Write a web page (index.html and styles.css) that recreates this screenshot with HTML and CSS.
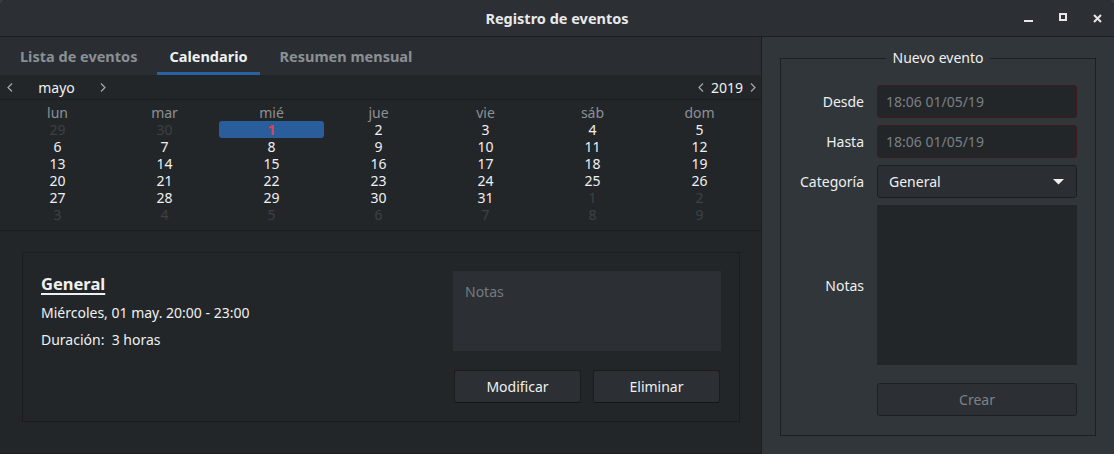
FILE: index.html
```html
<!DOCTYPE html>
<html lang="es">
<head>
<meta charset="utf-8">
<title>Registro de eventos</title>
<link rel="stylesheet" href="styles.css">
</head>
<body>
<div class="window">
  <header class="titlebar">
    <div class="title">Registro de eventos</div>
    <div class="controls">
      <svg class="ctl ctl-min" width="9" height="8" viewBox="0 0 9 8"><rect x="0" y="6" width="9" height="2" fill="#e6e7e8"/></svg>
      <svg class="ctl ctl-max" width="8" height="8" viewBox="0 0 8 8"><rect x="1" y="1" width="6" height="6" fill="none" stroke="#e6e7e8" stroke-width="2"/></svg>
      <svg class="ctl ctl-close" width="9" height="9" viewBox="0 0 9 9"><path d="M1 1 L8 8 M8 1 L1 8" stroke="#e6e7e8" stroke-width="2" fill="none"/></svg>
    </div>
  </header>

  <div class="main">
    <section class="left">
      <nav class="tabs">
        <div class="tab">Lista de eventos</div>
        <div class="tab active">Calendario</div>
        <div class="tab">Resumen mensual</div>
      </nav>

      <div class="calendar">
        <div class="cal-head">
          <div class="nav nav-month">
            <svg class="chev" width="6" height="9" viewBox="0 0 6 9"><path d="M5 0.5 L1 4.5 L5 8.5" fill="none" stroke="#a4a8ac" stroke-width="1.2"/></svg>
            <span class="nav-label month">mayo</span>
            <svg class="chev" width="6" height="9" viewBox="0 0 6 9"><path d="M1 0.5 L5 4.5 L1 8.5" fill="none" stroke="#a4a8ac" stroke-width="1.2"/></svg>
          </div>
          <div class="nav nav-year">
            <svg class="chev" width="6" height="9" viewBox="0 0 6 9"><path d="M5 0.5 L1 4.5 L5 8.5" fill="none" stroke="#a4a8ac" stroke-width="1.2"/></svg>
            <span class="nav-label year">2019</span>
            <svg class="chev" width="6" height="9" viewBox="0 0 6 9"><path d="M1 0.5 L5 4.5 L1 8.5" fill="none" stroke="#a4a8ac" stroke-width="1.2"/></svg>
          </div>
        </div>
        <div class="cal-grid">
          <div class="dn">lun</div><div class="dn">mar</div><div class="dn">mié</div><div class="dn">jue</div><div class="dn">vie</div><div class="dn">sáb</div><div class="dn">dom</div>
          <div class="d other">29</div><div class="d other">30</div><div class="d sel"><span>1</span></div><div class="d">2</div><div class="d">3</div><div class="d">4</div><div class="d">5</div>
          <div class="d">6</div><div class="d">7</div><div class="d">8</div><div class="d">9</div><div class="d">10</div><div class="d">11</div><div class="d">12</div>
          <div class="d">13</div><div class="d">14</div><div class="d">15</div><div class="d">16</div><div class="d">17</div><div class="d">18</div><div class="d">19</div>
          <div class="d">20</div><div class="d">21</div><div class="d">22</div><div class="d">23</div><div class="d">24</div><div class="d">25</div><div class="d">26</div>
          <div class="d">27</div><div class="d">28</div><div class="d">29</div><div class="d">30</div><div class="d">31</div><div class="d other">1</div><div class="d other">2</div>
          <div class="d other">3</div><div class="d other">4</div><div class="d other">5</div><div class="d other">6</div><div class="d other">7</div><div class="d other">8</div><div class="d other">9</div>
        </div>
      </div>

      <div class="details">
        <div class="card">
          <div class="info">
            <div class="ev-title">General</div>
            <div class="ev-line">Miércoles, 01 may. 20:00 - 23:00</div>
            <div class="ev-line">Duración:&nbsp; 3 horas</div>
          </div>
          <div class="side">
            <div class="notes-view">Notas</div>
            <div class="btn-row">
              <div class="btn">Modificar</div>
              <div class="btn">Eliminar</div>
            </div>
          </div>
        </div>
      </div>
    </section>

    <aside class="right">
      <fieldset class="group">
        <legend class="group-title">Nuevo evento</legend>
        <div class="form">
          <label class="lbl">Desde</label>
          <div class="field date">18:06 01/05/19</div>
          <label class="lbl">Hasta</label>
          <div class="field date">18:06 01/05/19</div>
          <label class="lbl">Categoría</label>
          <div class="field combo"><span>General</span>
            <svg width="11" height="6" viewBox="0 0 11 6"><path d="M0 0 L11 0 L5.5 5.5 Z" fill="#eff0f1"/></svg>
          </div>
          <label class="lbl">Notas</label>
          <div class="field textarea"></div>
          <div class="spacer"></div>
          <div class="field create">Crear</div>
        </div>
      </fieldset>
    </aside>
  </div>
</div>
</body>
</html>
```

FILE: styles.css
```css
* { box-sizing: border-box; }

html, body {
  margin: 0;
  padding: 0;
  background: #3a3d40;
}

body {
  font-family: "Noto Sans", "Liberation Sans", sans-serif;
  font-size: 14px;
  color: #eff0f1;
}

.window {
  width: 1114px;
  height: 454px;
  display: flex;
  flex-direction: column;
  border-radius: 6px 6px 0 0;
  overflow: hidden;
  background: #232629;
}

/* Title bar */
.titlebar {
  height: 37px;
  flex: none;
  background: #2c2f33;
  border-bottom: 1px solid #1b1d20;
  display: flex;
  align-items: center;
  justify-content: center;
  position: relative;
}

.title {
  font-weight: bold;
  font-size: 14.5px;
  color: #e8e9ea;
  line-height: 20px;
}

.controls {
  position: absolute;
  right: 12px;
  top: 13px;
  display: flex;
  align-items: flex-start;
  gap: 26px;
}

.ctl { display: block; }
.ctl-min { margin-top: 1px; }
.ctl-close { margin-top: 1px; }

/* Main area */
.main {
  flex: 1;
  display: flex;
  min-height: 0;
}

.left {
  width: 762px;
  flex: none;
  display: flex;
  flex-direction: column;
  border-right: 1px solid #1c1f22;
  background: #232629;
}

/* Tabs */
.tabs {
  height: 38px;
  flex: none;
  background: #2a2e32;
  display: flex;
  padding-left: 8px;
  gap: 8px;
}

.tab {
  padding: 2px 12px 0;
  font-weight: bold;
  font-size: 14.5px;
  color: #8b9095;
  display: flex;
  align-items: center;
  border-bottom: 3px solid transparent;
}

.tab.active {
  color: #eff0f1;
  border-bottom-color: #2862a5;
}

/* Calendar */
.calendar {
  height: 156px;
  flex: none;
  background: #232629;
  border-bottom: 1px solid #1b1d20;
}

.cal-head {
  height: 25px;
  border-bottom: 1px solid #1b1d20;
  display: flex;
  justify-content: space-between;
  align-items: center;
  padding: 1px 5px 0 7px;
}

.nav {
  display: flex;
  align-items: center;
}

.chev { display: block; }

.nav-label {
  text-align: center;
  line-height: 20px;
  color: #eff0f1;
}

.month { width: 87px; }
.year { width: 46px; }

.cal-grid {
  display: grid;
  grid-template-columns: repeat(7, 107px);
  grid-auto-rows: 17px;
  padding: 4px 0 0 4px;
  line-height: 17px;
  text-align: center;
}

.dn { color: #8c9196; }
.d { color: #eff0f1; }
.d.other { color: #3d4145; }

.d.sel {
  background: #2a5d9b;
  border-radius: 3px;
  margin: 0 1px;
  color: #da4453;
  font-weight: bold;
}

/* Details */
.details {
  flex: 1;
  padding: 21px 21px 0 22px;
  border-bottom: 1px solid #1b1d20;
}

.card {
  height: 170px;
  border: 1px solid #1a1c1f;
  display: flex;
  justify-content: space-between;
  padding: 18px 18px 18px 18px;
}

.ev-title {
  font-weight: bold;
  font-size: 16.5px;
  line-height: 26px;
  text-decoration: underline;
  text-decoration-thickness: 2px;
  text-underline-offset: 3px;
  margin-bottom: 2px;
}

.ev-line {
  line-height: 27px;
  color: #eff0f1;
}

.side {
  width: 268px;
  display: flex;
  flex-direction: column;
}

.notes-view {
  height: 80px;
  background: #2c3034;
  color: #767b80;
  padding: 11px 12px;
  line-height: 20px;
}

.btn-row {
  margin-top: 19px;
  display: flex;
  justify-content: space-between;
  padding-left: 1px;
  padding-right: 1px;
}

.btn {
  width: 127px;
  height: 33px;
  background: #2c3034;
  border: 1px solid #1a1c1e;
  border-bottom-color: #131517;
  border-radius: 3px;
  display: flex;
  align-items: center;
  justify-content: center;
  color: #eff0f1;
}

/* Right panel */
.right {
  flex: 1;
  background: #31363a;
  padding: 11px 18px 18px 18px;
  display: flex;
}

.group {
  margin: 0;
  flex: 1;
  border: 1px solid #1d2023;
  padding: 17px 18px 19px 18px;
  min-width: 0;
}

.group-title {
  margin-left: auto;
  margin-right: auto;
  padding: 0 7px;
  line-height: 20px;
  color: #eff0f1;
}

.form {
  display: grid;
  grid-template-columns: 65px 200px;
  column-gap: 13px;
  row-gap: 7px;
  grid-template-rows: 33px 33px 33px 160px 4px 33px;
}

.lbl {
  display: flex;
  align-items: center;
  justify-content: flex-end;
  color: #eff0f1;
  white-space: nowrap;
}

.field {
  border-radius: 3px;
  display: flex;
  align-items: center;
}

.date {
  background: #232629;
  border: 1px solid #3e1a1d;
  color: #7b8085;
  padding-left: 8px;
}

.combo {
  background: #2b2f33;
  border: 1px solid #1c1f22;
  padding: 0 12px 0 11px;
  justify-content: space-between;
}

.combo svg { display: block; margin-top: 1px; }

.textarea {
  background: #232629;
  border-radius: 0;
}

.spacer { grid-column: 1 / 3; }

.create {
  grid-column: 2;
  background: #2c3034;
  border: 1px solid #1d2023;
  color: #7d8287;
  justify-content: center;
}
```
